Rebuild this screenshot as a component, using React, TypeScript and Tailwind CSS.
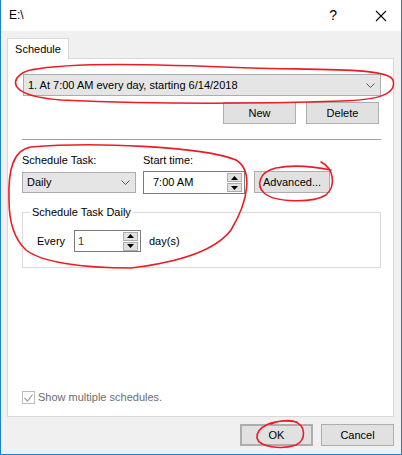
import React from 'react';

const Chevron = () => (
    <svg width="9" height="5" viewBox="0 0 9 5" className="shrink-0">
        <path d="M0.5 0.5 L4.5 4.5 L8.5 0.5" fill="none" stroke="#5a5a5a" strokeWidth="1" />
    </svg>
);

const Spinner = () => (
    <div className="flex flex-col gap-px w-[15px]">
        <div className="h-[9px] bg-[#e1e1e1] border border-[#adadad] flex items-center justify-center">
            <svg width="7" height="4" viewBox="0 0 7 4"><path d="M0 4 L3.5 0 L7 4 Z" fill="#000" /></svg>
        </div>
        <div className="h-[9px] bg-[#e1e1e1] border border-[#adadad] flex items-center justify-center">
            <svg width="7" height="4" viewBox="0 0 7 4"><path d="M0 0 L3.5 4 L7 0 Z" fill="#000" /></svg>
        </div>
    </div>
);

const Button = ({ label, w = 'w-[73px]', extra = '' }: { label: string; w?: string; extra?: string }) => (
    <div className={`${w} h-[22px] bg-[#e1e1e1] border border-[#adadad] flex items-center justify-center text-black ${extra}`}>
        {label}
    </div>
);

const App = () => {
    return (
        <div className="relative w-[402px] h-[455px] flex flex-col bg-[#f0f0f0] border-x border-b border-[#1883d7] font-['Liberation_Sans',Arial,sans-serif] text-[11px] text-black leading-[13px] overflow-hidden">
            {/* Title bar */}
            <div className="h-[31px] bg-white flex items-center pl-[8px] pr-[14px] text-[12px]">
                <span className="flex-1">E:\</span>
                <span className="text-[14px] mr-[38px]">?</span>
                <svg width="12" height="12" viewBox="0 0 12 12">
                    <path d="M1 1 L11 11 M11 1 L1 11" stroke="#000" strokeWidth="1.1" />
                </svg>
            </div>

            <div className="px-[6px] pt-[7px]">
                {/* Tab */}
                <div className="relative z-10 w-[62px] h-[21px] bg-white border-x border-t border-[#d9d9d9] -mb-px flex items-center justify-center">
                    Schedule
                </div>

                {/* Panel */}
                <div className="w-[387px] h-[359px] bg-white border border-[#d9d9d9] pl-[15px] pr-[12px] flex flex-col">
                    <div className="mt-[15px] h-[22px] bg-[#e5e5e5] border border-[#acacac] flex items-center pl-[4px] pr-[5px]">
                        <span className="flex-1">1. At 7:00 AM every day, starting 6/14/2018</span>
                        <Chevron />
                    </div>

                    <div className="mt-[6px] flex justify-end gap-[10px] pr-[2px]">
                        <Button label="New" />
                        <Button label="Delete" />
                    </div>

                    <div className="mt-[15px] h-px bg-[#a0a0a0] -ml-px" />

                    <div className="-ml-px mt-[14px] flex gap-[8px]">
                        <div className="w-[113px]">Schedule Task:</div>
                        <div>Start time:</div>
                    </div>

                    <div className="-ml-px mt-[4px] flex items-start">
                        <div className="mt-px w-[114px] h-[21px] bg-[#e5e5e5] border border-[#acacac] flex items-center pl-[4px] pr-[5px]">
                            <span className="flex-1">Daily</span>
                            <Chevron />
                        </div>
                        <div className="ml-[7px] w-[102px] h-[23px] border border-[#7a7a7a] flex items-center pl-[9px] pr-[2px]">
                            <span className="flex-1">7:00 AM</span>
                            <Spinner />
                        </div>
                        <div className="ml-[9px] w-[76px] h-[22px] bg-[#e1e1e1] border border-[#adadad] flex items-center pl-[8px]">
                            Advanced...
                        </div>
                    </div>

                    {/* Group box */}
                    <div className="-ml-px relative mt-[18px] h-[56px] border border-[#dcdcdc] pl-[14px] pt-[17px]">
                        <div className="absolute -top-[7px] left-[7px] bg-white px-[2px]">Schedule Task Daily</div>
                        <div className="flex items-center">
                            <span className="w-[37px]">Every</span>
                            <div className="w-[67px] h-[22px] border border-[#7a7a7a] flex items-center pl-[3px] pr-[2px]">
                                <span className="flex-1 text-[#404040]">1</span>
                                <Spinner />
                            </div>
                            <span className="ml-[8px]">day(s)</span>
                        </div>
                    </div>

                    <div className="flex-1" />

                    <div className="-ml-px mb-[12px] flex items-center gap-[3px] text-[#6d6d6d]">
                        <div className="w-[13px] h-[13px] border border-[#bcbcbc] flex items-center justify-center">
                            <svg width="9" height="8" viewBox="0 0 9 8">
                                <path d="M0.5 4 L3.5 7 L8.5 0.5" fill="none" stroke="#a0a0a0" strokeWidth="1.2" />
                            </svg>
                        </div>
                        <span>Show multiple schedules.</span>
                    </div>
                </div>

                {/* Footer */}
                <div className="mt-[7px] flex justify-end gap-[8px] pr-px">
                    <Button label="OK" extra="border-2 border-[#0078d7]" />
                    <Button label="Cancel" />
                </div>
            </div>

            {/* Red hand-drawn annotations */}
            <svg className="absolute left-0 top-0 pointer-events-none" width="402" height="455" viewBox="0 0 402 455">
                <g fill="none" stroke="#ec1c24" strokeWidth="1.6" strokeLinecap="round">
                    <path d="M30 70 C70 62 150 64 250 68 C330 70 386 68 392 80 C396 94 378 100 340 101 C250 104 150 104 60 100 C22 97 10 88 16 78 C20 72 28 70 34 69" />
                    <path d="M8 200 C7 170 12 150 30 147 C90 142 200 146 235 160 C252 170 248 200 230 230 C215 250 180 262 130 268 C80 268 40 262 25 250 C12 238 8 220 8 200" />
                    <path d="M320 162 C332 168 336 185 325 195 C312 203 275 203 263 193 C255 185 258 172 275 168 C290 165 310 166 330 170" />
                    <path d="M296 422 C270 418 255 428 256 438 C258 447 280 450 295 445 C305 440 306 425 292 421 C285 420 275 421 270 424" />
                </g>
            </svg>
        </div>
    );
};

export default App;
